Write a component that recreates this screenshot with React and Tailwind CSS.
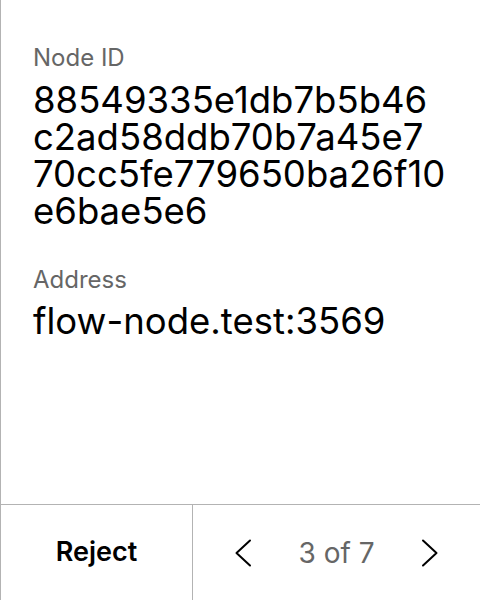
import React from "react";

const nodeIdLines = [
  "88549335e1db7b5b46",
  "c2ad58ddb70b7a45e7",
  "70cc5fe779650ba26f10",
  "e6bae5e6",
];

const Chevron = ({ dir }) => (
  <svg className="w-[18px] h-[28px]" viewBox="0 0 18 28" fill="none" stroke="currentColor" strokeWidth="2" strokeLinecap="round" strokeLinejoin="round">
    {dir === "left" ? <path d="M16 1.5L2.5 14L16 26.5" /> : <path d="M2 1.5L15.5 14L2 26.5" />}
  </svg>
);

export default function App() {
  return (
    <div className="w-[480px] h-[600px] flex flex-col bg-white border-l border-[#b3b3b3] text-black font-['Inter',sans-serif]">
      {/* Details */}
      <div className="flex-1 pl-8 pr-6 pt-[43px]">
        <div className="text-[24px] leading-[30px] text-[#666666]">Node ID</div>
        <div className="mt-[9px] text-[36.5px] leading-[37px]">
          {nodeIdLines.map((line) => (
            <div key={line}>{line}</div>
          ))}
        </div>
        <div className="mt-[35px] text-[24px] leading-[30px] text-[#666666]">Address</div>
        <div className="mt-[7px] text-[36.5px] leading-[38px]">flow-node.test:3569</div>
      </div>

      {/* Footer */}
      <div className="h-24 flex border-t border-[#b3b3b3]">
        <button className="w-[192px] flex items-center justify-center border-r border-[#b3b3b3] text-[27px] font-semibold">
          Reject
        </button>
        <div className="flex-1 flex items-center justify-between px-[41px]">
          <Chevron dir="left" />
          <span className="text-[28px] text-[#666666]">3 of 7</span>
          <Chevron dir="right" />
        </div>
      </div>
    </div>
  );
}
